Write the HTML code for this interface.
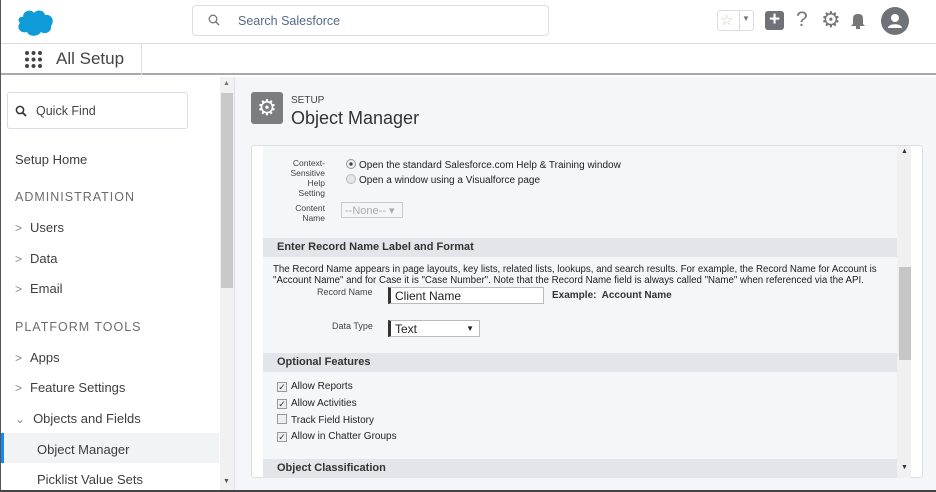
<!DOCTYPE html>
<html><head><style>
*{margin:0;padding:0;box-sizing:border-box}
body{width:936px;height:492px;overflow:hidden;background:#fff;font-family:"Liberation Sans",sans-serif;position:relative;border-left:1px solid #555;border-bottom:2px solid #444}
.abs{position:absolute}
.nav{font-size:13px;color:#3e3e3c;position:absolute;left:14px}
.chev{color:#888;margin-right:8px;font-size:12px}
.sec{font-size:12.5px;color:#6b6d70;letter-spacing:1px;position:absolute;left:14px}
.f{font-size:10px;color:#222}
.hdr{position:absolute;left:262px;width:634px;height:19px;background:#e4e5ea;font-weight:bold;font-size:11px;color:#333;padding:3px 0 0 14px}
.cb{display:inline-block;width:10px;height:10px;border:1px solid #999;background:#eee;font-size:9px;line-height:9px;text-align:center;vertical-align:-1px;margin-right:4px;color:#333}
</style></head><body>
<div class="abs" style="left:0;top:0;width:936px;height:44px;border-bottom:1px solid #dcdde2"></div>
<svg class="abs" style="left:14px;top:7px" width="42" height="30" viewBox="0 0 42 30"><path d="M8 10 C8 3 17 2 19 6 C22 2 29 3 30 8 C37 7 40 14 36 19 C37 25 30 28 26 25 C23 30 14 30 12 25 C5 27 1 20 5 16 C2 13 4 9 8 10Z" fill="#0f9bd7"/></svg>
<div class="abs" style="left:191px;top:5px;width:357px;height:31px;border:1px solid #d8dde6;border-radius:4px;font-size:12.5px;color:#54698d;padding:8px 0 0 45px">Search Salesforce</div>
<svg class="abs" style="left:207px;top:14px" width="12" height="12" viewBox="0 0 12 12"><circle cx="5" cy="5" r="3.8" fill="none" stroke="#777" stroke-width="1.3"/><path d="M8 8L11 11" stroke="#777" stroke-width="1.5"/></svg>
<div class="abs" style="left:716px;top:10px;width:37px;height:21px;border:1px solid #d8dde6;border-radius:3px"></div>
<div class="abs" style="left:738px;top:10px;width:1px;height:21px;background:#d8dde6"></div>
<div class="abs" style="left:719px;top:11px;font-size:15px;color:#ccc">☆</div>
<div class="abs" style="left:741px;top:14px;font-size:8px;color:#777">▼</div>
<div class="abs" style="left:764px;top:11px;width:19px;height:19px;background:#6f7276;border-radius:3px;color:#fff;font-size:19px;line-height:18px;text-align:center;font-weight:bold">+</div>
<div class="abs" style="left:795px;top:8px;font-size:21px;color:#777">?</div>
<div class="abs" style="left:820px;top:7px;font-size:22px;color:#777">⚙</div>
<svg class="abs" style="left:849px;top:12px" width="16" height="17" viewBox="0 0 16 17"><path d="M3 12 V7 C3 3 5 2 8 2 C11 2 13 3 13 7 V12 L15 14 H1Z" fill="#777"/><rect x="6" y="14" width="4" height="3" fill="#777"/></svg>
<div class="abs" style="left:880px;top:7px;width:28px;height:28px;border-radius:50%;background:#6f7276"></div>
<svg class="abs" style="left:884px;top:11px" width="20" height="20" viewBox="0 0 20 20"><circle cx="10" cy="7" r="4" fill="#fff"/><path d="M3 17 C3 12 17 12 17 17Z" fill="#fff"/></svg>
<div class="abs" style="left:0;top:44px;width:936px;height:31px;border-bottom:2px solid #a8a9ab"></div>
<svg class="abs" style="left:23px;top:50px" width="19" height="19"><g fill="#444"><circle cx="3" cy="3" r="2"/><circle cx="9.5" cy="3" r="2"/><circle cx="16" cy="3" r="2"/><circle cx="3" cy="9.5" r="2"/><circle cx="9.5" cy="9.5" r="2"/><circle cx="16" cy="9.5" r="2"/><circle cx="3" cy="16" r="2"/><circle cx="9.5" cy="16" r="2"/><circle cx="16" cy="16" r="2"/></g></svg>
<div class="abs" style="left:55px;top:49px;font-size:17px;color:#444">All Setup</div>
<div class="abs" style="left:140px;top:44px;width:1px;height:31px;background:#dcdde2"></div>
<div class="abs" style="left:6px;top:92px;width:181px;height:37px;border:1px solid #d8dde6;border-radius:3px;font-size:12.5px;color:#444;padding:11px 0 0 28px">Quick Find</div>
<svg class="abs" style="left:14px;top:105px" width="12" height="12" viewBox="0 0 12 12"><circle cx="5" cy="5" r="3.6" fill="none" stroke="#333" stroke-width="1.5"/><path d="M7.5 7.5L11 11" stroke="#333" stroke-width="1.8"/></svg>
<div class="nav" style="top:152px">Setup Home</div>
<div class="sec" style="top:190px">ADMINISTRATION</div>
<div class="nav" style="top:220px"><span class="chev">&gt;</span>Users</div>
<div class="nav" style="top:251px"><span class="chev">&gt;</span>Data</div>
<div class="nav" style="top:281px"><span class="chev">&gt;</span>Email</div>
<div class="sec" style="top:320px">PLATFORM TOOLS</div>
<div class="nav" style="top:350px"><span class="chev">&gt;</span>Apps</div>
<div class="nav" style="top:380px"><span class="chev">&gt;</span>Feature Settings</div>
<div class="nav" style="top:411px"><span class="chev">⌄</span>Objects and Fields</div>
<div class="abs" style="left:0;top:433px;width:218px;height:30px;background:#f2f3f5"></div>
<div class="abs" style="left:0;top:433px;width:3px;height:30px;background:#1589ee"></div>
<div class="nav" style="top:442px;left:36px">Object Manager</div>
<div class="nav" style="top:472px;left:36px">Picklist Value Sets</div>
<div class="abs" style="left:219px;top:77px;width:14px;height:413px;background:#f1f1f1"></div>
<div class="abs" style="left:220px;top:93px;width:12px;height:195px;background:#c8c8c8"></div>
<div class="abs" style="left:222px;top:80px;font-size:7px;color:#777">▲</div>
<div class="abs" style="left:222px;top:478px;font-size:7px;color:#555">▼</div>
<div class="abs" style="left:233px;top:77px;width:703px;height:413px;background:#f4f6f9;border-left:1px solid #e0e0e0"></div>
<div class="abs" style="left:250px;top:92px;width:32px;height:32px;background:#7b7d80;border-radius:3px;color:#fff;font-size:22px;text-align:center;line-height:31px">⚙</div>
<div class="abs" style="left:290px;top:95px;font-size:10px;color:#444">SETUP</div>
<div class="abs" style="left:290px;top:108px;font-size:18px;color:#333">Object Manager</div>
<div class="abs" style="left:250px;top:145px;width:672px;height:333px;background:#fff;border:1px solid #dcdde2;border-radius:3px"></div>
<div class="abs" style="left:262px;top:146px;width:634px;height:332px;background:#f5f6f8"></div>
<div class="abs" style="left:896px;top:146px;width:14px;height:332px;background:#f0f0f0"></div>
<div class="abs" style="left:898px;top:267px;width:12px;height:93px;background:#c6c6c6"></div>
<div class="abs" style="left:900px;top:148px;font-size:7px;color:#333">▲</div>
<div class="abs" style="left:900px;top:464px;font-size:7px;color:#333">▼</div>
<div class="abs f" style="left:270px;top:158px;width:54px;text-align:right;font-size:8.5px;color:#444;line-height:10px">Context-<br>Sensitive<br>Help<br>Setting</div>
<div class="abs f" style="left:345px;top:159px"><span style="display:inline-block;width:10px;height:10px;border-radius:50%;border:1px solid #999;background:radial-gradient(#444 25%,#eee 35%);vertical-align:-1px;margin-right:3px"></span>Open the standard Salesforce.com Help &amp; Training window</div>
<div class="abs f" style="left:345px;top:174px"><span style="display:inline-block;width:10px;height:10px;border-radius:50%;border:1px solid #bbb;background:#e6e6e6;vertical-align:-1px;margin-right:3px"></span>Open a window using a Visualforce page</div>
<div class="abs f" style="left:280px;top:203px;width:44px;text-align:right;font-size:8.5px;color:#444;line-height:10px">Content<br>Name</div>
<div class="abs" style="left:340px;top:202px;width:62px;height:16px;border:1px solid #ccc;font-size:11px;color:#aaa;padding:1px 3px">--None-- ▾</div>
<div class="hdr" style="top:238px">Enter Record Name Label and Format</div>
<div class="abs f" style="left:272px;top:264px;width:624px;line-height:11px;font-size:9.7px">The Record Name appears in page layouts, key lists, related lists, lookups, and search results. For example, the Record Name for Account is "Account Name" and for Case it is "Case Number". Note that the Record Name field is always called "Name" when referenced via the API.</div>
<div class="abs" style="left:316px;top:287px;font-size:9px;color:#444">Record Name</div>
<div class="abs" style="left:387px;top:287px;width:156px;height:17px;border:1px solid #bbb;border-left:3px solid #333;background:#fff;font-size:12px;color:#222;padding:1px 4px">Client Name</div>
<div class="abs" style="left:551px;top:290px;font-size:10px;font-weight:bold;color:#333">Example:&nbsp; Account Name</div>
<div class="abs" style="left:331px;top:321px;font-size:9px;color:#444">Data Type</div>
<div class="abs" style="left:387px;top:320px;width:92px;height:17px;border:1px solid #bbb;border-left:3px solid #333;background:#fff;font-size:12px;color:#222;padding:1px 4px">Text<span style="position:absolute;right:5px;top:3px;font-size:8px">▼</span></div>
<div class="hdr" style="top:353px">Optional Features</div>
<div class="abs f" style="left:276px;top:381px"><span class="cb">✓</span>Allow Reports</div>
<div class="abs f" style="left:276px;top:398px"><span class="cb">✓</span>Allow Activities</div>
<div class="abs f" style="left:276px;top:414px"><span class="cb"></span>Track Field History</div>
<div class="abs f" style="left:276px;top:431px"><span class="cb">✓</span>Allow in Chatter Groups</div>
<div class="hdr" style="top:459px">Object Classification</div>
</body></html>
